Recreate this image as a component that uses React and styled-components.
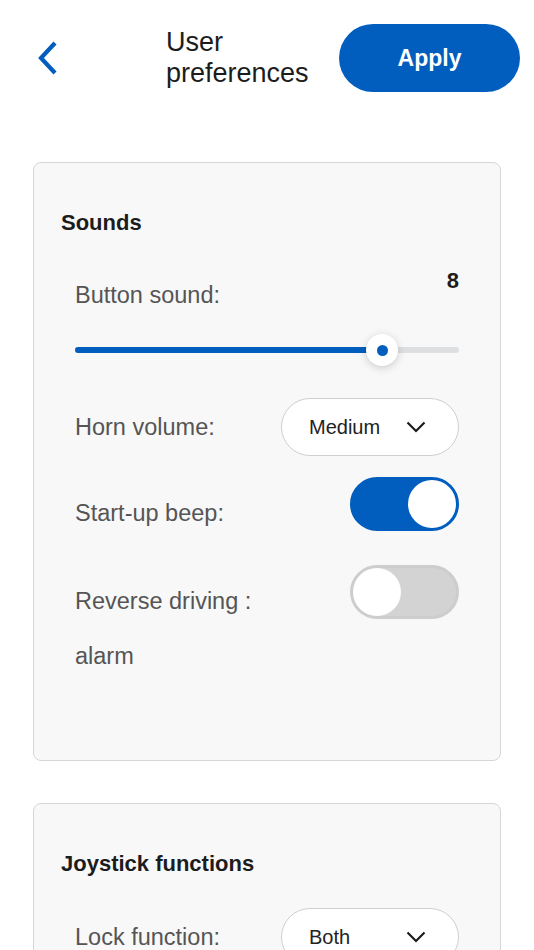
import React from 'react';
import styled, { createGlobalStyle } from 'styled-components';

const Global = createGlobalStyle`
	body {
		margin: 0;
		background: #ffffff;
		font-family: 'Liberation Sans', Arial, sans-serif;
	}
`;

const Page = styled.div`
	width: 534px;
	padding-bottom: 40px;
`;

const Header = styled.div`
	display: flex;
	align-items: center;
	padding: 24px 14px 0 30px;
`;

const BackButton = styled.button`
	width: 36px;
	height: 44px;
	padding: 0;
	border: none;
	background: none;
	display: flex;
	align-items: center;
	justify-content: center;
	cursor: pointer;
`;

const Title = styled.h1`
	flex: 1;
	margin: 0 0 0 100px;
	font-size: 27px;
	line-height: 31px;
	font-weight: 400;
	color: #1c1c1c;
`;

const ApplyButton = styled.button`
	width: 181px;
	height: 68px;
	border: none;
	border-radius: 34px;
	background: #015ebe;
	color: #ffffff;
	font-family: inherit;
	font-size: 23px;
	font-weight: 700;
	cursor: pointer;
`;

const Card = styled.section`
	margin: ${(p) => p.top}px 33px 0;
	padding: 46px 0 ${(p) => p.bottom}px;
	background: #f8f8f8;
	border: 1.5px solid #d6d6d6;
	border-radius: 8px;
`;

const CardTitle = styled.h2`
	margin: 0 0 30px 27px;
	font-size: 22px;
	line-height: 28px;
	font-weight: 700;
	color: #1c1c1c;
`;

const Body = styled.div`
	padding: 0 41px 0 41px;
	display: flex;
	flex-direction: column;
`;

const Label = styled.span`
	flex: 0 1 205px;
	font-size: 23.5px;
	line-height: ${(p) => p.lh || 28}px;
	padding-top: ${(p) => p.pt || 0}px;
	color: #555555;
`;

const SliderHead = styled.div`
	display: flex;
	justify-content: space-between;
	align-items: flex-start;
`;

const Value = styled.span`
	font-size: 22px;
	line-height: 28px;
	font-weight: 700;
	color: #1c1c1c;
`;

const SliderTrack = styled.div`
	position: relative;
	margin-top: 27px;
	height: 28px;
	display: flex;
	align-items: center;
	&::before {
		content: '';
		width: 100%;
		height: 6px;
		border-radius: 3px;
		background: #dedfe1;
	}
`;

const SliderFill = styled.div`
	position: absolute;
	left: 0;
	top: 11px;
	height: 6px;
	border-radius: 3px;
	background: #015ebe;
`;

const Thumb = styled.div`
	position: absolute;
	top: -2px;
	width: 32px;
	height: 32px;
	margin-left: -16px;
	border-radius: 50%;
	background: #ffffff;
	box-shadow: 0 2px 8px rgba(0, 0, 0, 0.18);
	display: flex;
	align-items: center;
	justify-content: center;
	&::after {
		content: '';
		width: 11px;
		height: 11px;
		border-radius: 50%;
		background: #015ebe;
	}
`;

const Row = styled.div`
	display: flex;
	justify-content: space-between;
	align-items: ${(p) => p.align || 'center'};
	margin-top: ${(p) => p.mt}px;
`;

const Select = styled.button`
	width: 178px;
	height: 58px;
	padding: 0 32px 0 27px;
	border: 1.5px solid #cfcfcf;
	border-radius: 29px;
	background: #ffffff;
	display: flex;
	align-items: center;
	justify-content: space-between;
	font-family: inherit;
	font-size: 20px;
	color: #222222;
	cursor: pointer;
`;

const Toggle = styled.div`
	flex: none;
	width: 109px;
	height: 54px;
	box-sizing: border-box;
	border-radius: 27px;
	border: 3px solid ${(p) => (p.on ? '#015ebe' : '#cdcdcd')};
	background: ${(p) => (p.on ? '#015ebe' : '#d3d3d3')};
	display: flex;
	justify-content: ${(p) => (p.on ? 'flex-end' : 'flex-start')};
	&::after {
		content: '';
		width: 48px;
		height: 48px;
		border-radius: 50%;
		background: #ffffff;
	}
`;

const Chevron = () => (
	<svg width="20" height="12" viewBox="0 0 20 12" fill="none">
		<path d="M1.5 1.5 L10 10 L18.5 1.5" stroke="#1c1c1c" strokeWidth="2.2" />
	</svg>
);

const Dropdown = ({ value }) => (
	<Select>
		<span>{value}</span>
		<Chevron />
	</Select>
);

export default function App() {
	const level = 8;
	return (
		<Page>
			<Global />
			<Header>
				<BackButton aria-label="Back">
					<svg width="20" height="34" viewBox="0 0 20 34" fill="none">
						<path d="M17 2 L3 17 L17 32" stroke="#015ebe" strokeWidth="4.2" />
					</svg>
				</BackButton>
				<Title>User preferences</Title>
				<ApplyButton>Apply</ApplyButton>
			</Header>

			<Card top={70} bottom={76}>
				<CardTitle>Sounds</CardTitle>
				<Body>
					<SliderHead>
						<Label pt={14}>Button sound:</Label>
						<Value>{level}</Value>
					</SliderHead>
					<SliderTrack>
						<SliderFill style={{ width: `${level * 10}%` }} />
						<Thumb style={{ left: `${level * 10}%` }} />
					</SliderTrack>
					<Row mt={34}>
						<Label>Horn volume:</Label>
						<Dropdown value="Medium" />
					</Row>
					<Row mt={21} align="flex-start">
						<Label lh={55} pt={9}>Start-up beep:</Label>
						<Toggle on />
					</Row>
					<Row mt={24} align="flex-start">
						<Label lh={55} pt={9}>Reverse driving : alarm</Label>
						<Toggle />
					</Row>
				</Body>
			</Card>

			<Card top={42} bottom={40}>
				<CardTitle>Joystick functions</CardTitle>
				<Body>
					<Row mt={0}>
						<Label>Lock function:</Label>
						<Dropdown value="Both" />
					</Row>
				</Body>
			</Card>
		</Page>
	);
}
